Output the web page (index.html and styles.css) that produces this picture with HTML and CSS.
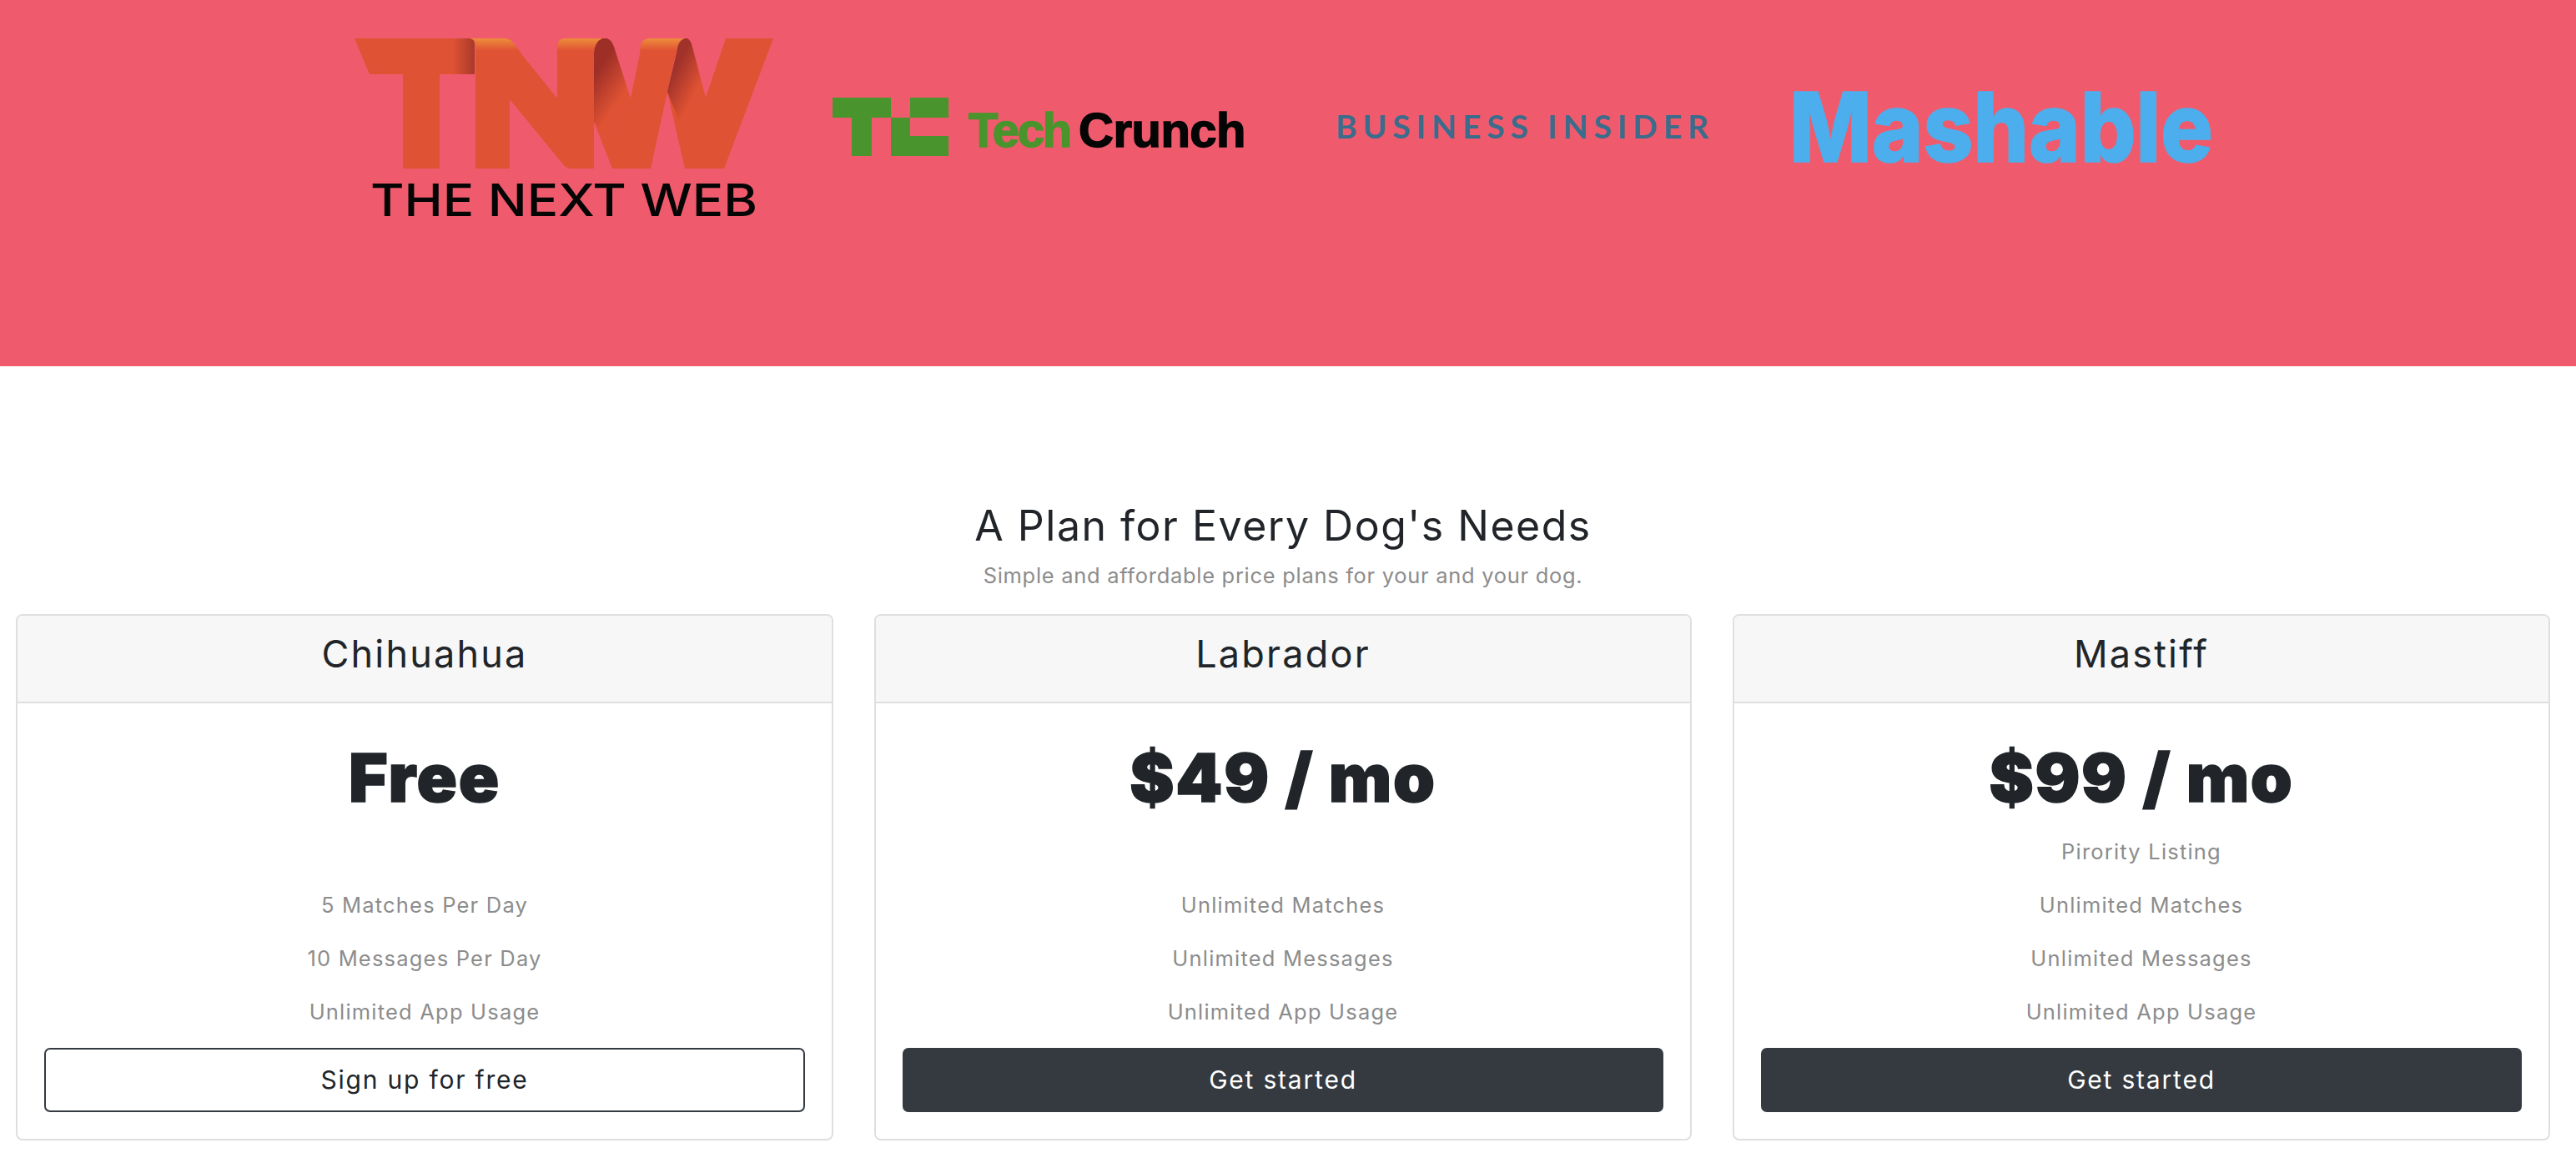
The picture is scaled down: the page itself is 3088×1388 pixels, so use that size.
FILE: index.html
```html
<!DOCTYPE html>
<html lang="en">
<head>
<meta charset="utf-8">
<title>Tindog pricing</title>
<link rel="stylesheet" href="styles.css">
</head>
<body>
<section class="press">
  <svg class="logo logo-tnw" viewBox="0 0 560 260" aria-label="The Next Web">
    <defs>
      <linearGradient id="tfold" x1="0" x2="1" y1="0" y2="0">
        <stop offset="0" stop-color="#df5233"/><stop offset="1" stop-color="#a83a2a"/>
      </linearGradient>
      <linearGradient id="band" x1="0" x2="0" y1="0" y2="1">
        <stop offset="0" stop-color="#ee8c3b"/><stop offset="1" stop-color="#df5233"/>
      </linearGradient>
      <linearGradient id="fold" gradientUnits="userSpaceOnUse" x1="318" y1="62" x2="352" y2="86">
        <stop offset="0" stop-color="#9e2f27"/><stop offset="1" stop-color="#df5233"/>
      </linearGradient>
      <linearGradient id="fold2" gradientUnits="userSpaceOnUse" x1="406" y1="70" x2="436" y2="86">
        <stop offset="0" stop-color="#a0322a"/><stop offset="1" stop-color="#df5233"/>
      </linearGradient>
    </defs>
    <path fill="#df5233" d="M25 26H146V69H127V182H83V69H43Z"/>
    <path fill="url(#tfold)" d="M143 26H164Q169 27 169 33V69H143Z"/>
    <path fill="#df5233" d="M170 26H210L268 98V32H312V182H283Q278 181 275 177L211 99V182H170Z"/>
    <path fill="url(#band)" d="M163 26H207Q212 27 215 31L223 41H170V33Q169 27 163 26Z"/>
    <path fill="url(#band)" d="M268 41V35Q269 27 276 26H326L313 41Z"/>
    <path fill="url(#fold)" d="M312 43Q313 30 322 26H328Q333 28 336 36L356 98L325 144L312 126Z"/>
    <path fill="#df5233" d="M312 126L334 182H380L400 90L413 30L368 40L356 98L325 144Z"/>
    <path fill="url(#band)" d="M367 41L368 34Q370 27 377 26H423L412 41Z"/>
    <path fill="#df5233" d="M400 90L421 182H468L527 26H470L446 97L430 60Z"/>
    <path fill="url(#fold2)" d="M413 34Q415 28 421 26H424Q428 28 430 36L446 97L421 142L400 90Z"/>
    <text class="tnw-name" x="44" y="239" textLength="464" lengthAdjust="spacingAndGlyphs">THE NEXT WEB</text>
  </svg>
  <svg class="logo logo-tc" viewBox="0 0 520 260" aria-label="TechCrunch">
    <path fill="#4a942d" d="M18 97H88V121H65V167H41V121H18ZM88 121H111V97H157V121H111V143H157V167H88Z"/>
    <text class="tc-name tc-green" x="181" y="156">Tech</text>
    <text class="tc-name tc-black" x="313" y="156">Crunch</text>
  </svg>
  <svg class="logo logo-bi" viewBox="0 0 510 260" aria-label="Business Insider">
    <text class="bi-name" x="41" y="146" textLength="447" lengthAdjust="spacing">BUSINESS INSIDER</text>
  </svg>
  <svg class="logo logo-mash" viewBox="0 0 580 260" aria-label="Mashable">
    <text class="mash-name" x="45" y="174" textLength="508" lengthAdjust="spacingAndGlyphs">Mashable</text>
  </svg>
</section>

<section class="pricing">
  <h2 class="pricing-title">A Plan for Every Dog's Needs</h2>
  <p class="pricing-sub">Simple and affordable price plans for your and your dog.</p>
  <div class="plans">
    <article class="plan">
      <header class="plan-head"><h3 class="plan-name">Chihuahua</h3></header>
      <div class="plan-body">
        <div class="plan-price">Free</div>
        <ul class="plan-list">
          <li>&nbsp;</li>
          <li>5 Matches Per Day</li>
          <li>10 Messages Per Day</li>
          <li>Unlimited App Usage</li>
        </ul>
        <a class="btn btn-outline">Sign up for free</a>
      </div>
    </article>
    <article class="plan">
      <header class="plan-head"><h3 class="plan-name">Labrador</h3></header>
      <div class="plan-body">
        <div class="plan-price">$49 / mo</div>
        <ul class="plan-list">
          <li>&nbsp;</li>
          <li>Unlimited Matches</li>
          <li>Unlimited Messages</li>
          <li>Unlimited App Usage</li>
        </ul>
        <a class="btn btn-dark">Get started</a>
      </div>
    </article>
    <article class="plan">
      <header class="plan-head"><h3 class="plan-name">Mastiff</h3></header>
      <div class="plan-body">
        <div class="plan-price">$99 / mo</div>
        <ul class="plan-list">
          <li>Pirority Listing</li>
          <li>Unlimited Matches</li>
          <li>Unlimited Messages</li>
          <li>Unlimited App Usage</li>
        </ul>
        <a class="btn btn-dark">Get started</a>
      </div>
    </article>
  </div>
</section>
</body>
</html>
```
FILE: styles.css
```css
* { box-sizing: border-box; }
html, body { margin: 0; padding: 0; background: #fff; }
body { font-family: Inter, "Liberation Sans", sans-serif; color: #212529; }

.press {
  height: 439px;
  background: #ef5b6d;
  display: flex;
  align-items: flex-start;
  padding: 20px 0 0 400px;
}
.logo { display: block; height: 260px; flex: none; }
.logo-tnw { width: 560px; margin-right: 20px; }
.logo-tc { width: 520px; margin-right: 60px; }
.logo-bi { width: 510px; margin-right: 30px; }
.logo-mash { width: 580px; }

.tnw-name { font: 500 54px Inter, sans-serif; fill: #050505; }
.tc-name { font: 700 58px "Liberation Sans", sans-serif; stroke-width: 1.5px; }
.tc-green { fill: #4a942d; stroke: #4a942d; letter-spacing: -2.3px; }
.tc-black { fill: #050505; stroke: #050505; letter-spacing: -0.5px; }
.bi-name { font: 700 39px Lato, sans-serif; fill: #3b6c8b; }
.mash-name { font: 800 115px Inter, sans-serif; fill: #4caeec; stroke: #4caeec; stroke-width: 1.5px; }

.pricing { padding: 161px 31px 21px 19px; }
.pricing-title {
  margin: 0 0 15px;
  font-size: 50px;
  line-height: 60px;
  font-weight: 400;
  text-align: center;
  letter-spacing: 1.5px;
}
.pricing-sub {
  margin: 0 0 31px;
  font-size: 25.5px;
  line-height: 30px;
  color: #8c8c8c;
  text-align: center;
  letter-spacing: 0.7px;
}

.plans { display: grid; grid-template-columns: repeat(3, 980px); column-gap: 49px; }
.plan { border: 2px solid #dfdfdf; border-radius: 8px; overflow: hidden; background: #fff; }
.plan-head {
  background: #f7f7f7;
  border-bottom: 2px solid #dfdfdf;
  padding: 20px 0 32px;
  text-align: center;
}
.plan-name { margin: 0; font-size: 45px; line-height: 51px; font-weight: 400; letter-spacing: 2.2px; }
.plan-body { padding: 44px 32px 32px; text-align: center; }
.plan-price {
  font-size: 80px;
  line-height: 90px;
  font-weight: 900;
  letter-spacing: 1.7px;
  -webkit-text-stroke: 1.5px #212529;
}
.plan-list { list-style: none; margin: 12px 0 11px; padding: 0; }
.plan-list li { height: 64px; line-height: 64px; font-size: 25.5px; color: #8c8c8c; letter-spacing: 1.2px; }
.btn {
  display: block;
  height: 77px;
  line-height: 73px;
  border: 2px solid #343a40;
  border-radius: 7px;
  font-size: 30px;
  letter-spacing: 1.8px;
  text-align: center;
}
.btn-outline { background: #fff; color: #212529; }
.btn-dark { background: #343a40; color: #fff; }
```
